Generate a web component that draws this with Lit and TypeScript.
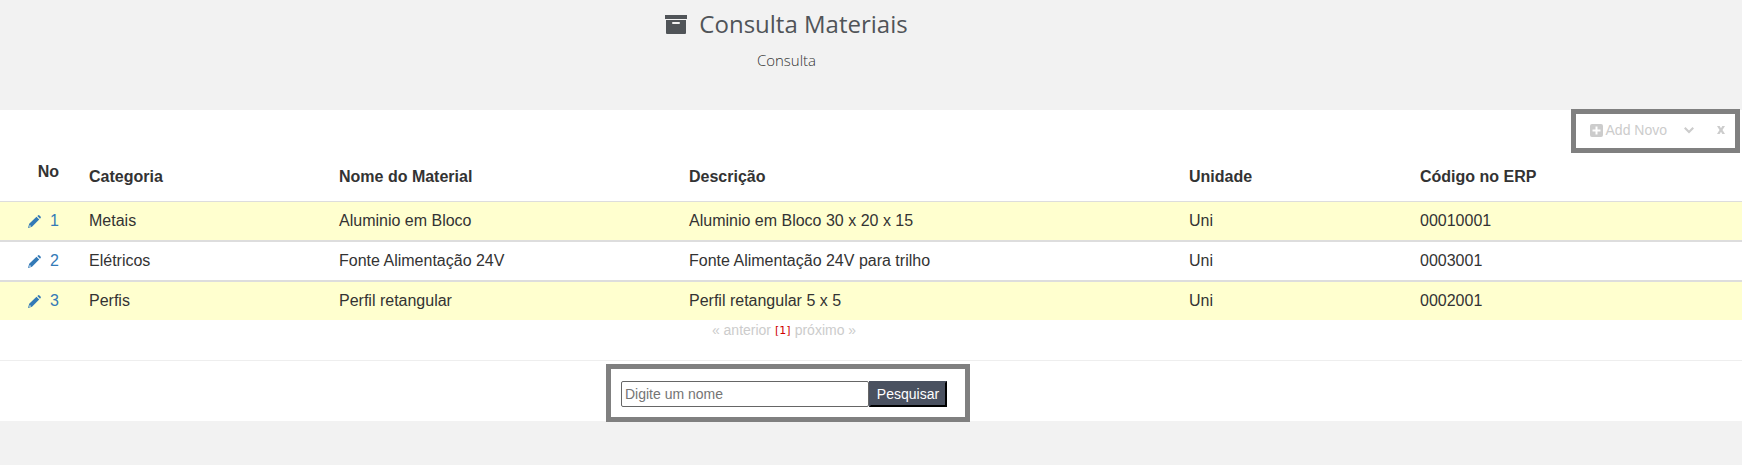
import { LitElement, html, css, svg } from "lit";
import { customElement, state } from "lit/decorators.js";

interface Material {
  no: number;
  categoria: string;
  nome: string;
  descricao: string;
  unidade: string;
  codigo: string;
}

const icon = (cls: string, box: string, d: string) => html`
  <svg class=${cls} viewBox=${box} aria-hidden="true">${svg`<path fill-rule="evenodd" d=${d}></path>`}</svg>
`;

const ARCHIVE = "M0 0H22V4H0ZM1 5H21V18Q21 19 20 19H2Q1 19 1 18ZM8 7Q7 7 7 8T8 9H14Q15 9 15 8T14 7Z";
const PENCIL = "M0 13L1.200 8.800L8.500 1.800L11.200 4.500L4 11.700ZM9.300 1L10 .4Q10.800 -.2 11.500 .5L12.500 1.500Q13.300 2.300 12.600 3L12 3.700ZM1.200 11.900L3.200 11.300L1.800 9.900Z";
const PLUS = "M2 0H11Q13 0 13 2V11Q13 13 11 13H2Q0 13 0 11V2Q0 0 2 0ZM5.500 2.500V5.500H2.500V7.500H5.500V10.500H7.500V7.500H10.500V5.500H7.500V2.500Z";
const CHEVRON = "M0 1.500L1.500 0L5 3.500L8.500 0L10 1.500L5 6.500Z";
const CROSS = "M0 0H2.600L4 2.200L5.400 0H8L5.500 4L8 8H5.400L4 5.800L2.600 8H0L2.500 4Z";

@customElement("app-root")
export class AppRoot extends LitElement {
  @state() private materiais: Material[] = [
    { no: 1, categoria: "Metais", nome: "Aluminio em Bloco", descricao: "Aluminio em Bloco 30 x 20 x 15", unidade: "Uni", codigo: "00010001" },
    { no: 2, categoria: "Elétricos", nome: "Fonte Alimentação 24V", descricao: "Fonte Alimentação 24V para trilho", unidade: "Uni", codigo: "0003001" },
    { no: 3, categoria: "Perfis", nome: "Perfil retangular", descricao: "Perfil retangular 5 x 5", unidade: "Uni", codigo: "0002001" },
  ];

  static styles = css`
    :host {
      display: block;
      min-height: 100vh;
      background: #f2f2f2;
      color: #333;
      font: 16px/20px "Liberation Sans", Arial, sans-serif;
    }
    * { box-sizing: border-box; }
    svg { display: block; fill: currentColor; }
    a { text-decoration: none; }
    header {
      display: flex;
      flex-direction: column;
      align-items: center;
      gap: 8px;
      height: 110px;
      padding: 7px 169px 0 0;
      color: #505458;
      font-family: "Open Sans", sans-serif;
    }
    h1 {
      display: flex;
      align-items: center;
      gap: 12px;
      margin: 0;
      font-size: 24px;
      font-weight: 400;
      line-height: 34px;
    }
    .archive { width: 22px; height: 19px; }
    .subtitle { margin: 0; color: #333; font-size: 15px; font-weight: 300; line-height: 22px; }
    main { background: #fff; }
    .toolbar { display: flex; justify-content: flex-end; height: 44px; padding-right: 2px; }
    .tools {
      display: flex;
      align-items: center;
      height: 44px;
      margin-top: -1px;
      padding: 0 10px 2px 14px;
      border: 5px solid #808080;
      color: #ccc;
      font-size: 14px;
    }
    .tools a, .tools button { color: inherit; }
    .add { display: flex; align-items: center; gap: 3px; margin-right: 17px; }
    .tools button { padding: 0; border: 0; background: none; }
    .plus { width: 13px; height: 13px; }
    .chevron { width: 10px; height: 7px; }
    .cross { width: 8px; height: 8px; margin-left: 23px; }
    table { width: 100%; table-layout: fixed; border-collapse: separate; border-spacing: 0; }
    .c-no { width: 74px; }
    .c-cat { width: 250px; }
    .c-nome { width: 350px; }
    .c-desc { width: 500px; }
    .c-uni { width: 231px; }
    th, td { padding: 0 15px; text-align: left; white-space: nowrap; }
    th { height: 48px; padding-top: 13px; border-bottom: 1px solid #ddd; vertical-align: top; }
    th.no { padding-top: 8px; }
    .no { text-align: right; }
    td { height: 40px; border-bottom: 2px solid #ddd; }
    tr:last-child td { height: 38px; border-bottom: 0; }
    tbody tr:nth-child(odd) { background: #ffffcf; }
    .edit { display: flex; align-items: center; justify-content: flex-end; gap: 9px; color: #337ab7; }
    .pencil { width: 13px; height: 13px; }
    .pages {
      display: flex;
      justify-content: center;
      gap: 4px;
      height: 41px;
      padding-right: 174px;
      border-bottom: 1px solid #eee;
      color: #ccc;
      font-size: 14px;
    }
    .pages a { color: inherit; }
    .current { color: #d00000; font: 11px/22px "DejaVu Sans", sans-serif; }
    .search { display: flex; justify-content: center; padding: 3px 166px 0 0; }
    form {
      display: flex;
      height: 58px;
      margin-bottom: -1px;
      padding: 12px 18px 10px 10px;
      border: 5px solid #808080;
    }
    input, form button { height: 26px; font: 14px "Liberation Sans", Arial, sans-serif; }
    input { width: 248px; padding: 1px 3px; border: 1px solid #666; border-radius: 2px; background: #fff; }
    input::placeholder { color: #757575; }
    form button { width: 78px; padding: 0; border: 2px solid; border-color: #4a5160 #000 #000 #4a5160; background: #4a5160; color: #fff; }
  `;

  render() {
    return html`
      <header>
        <h1>${icon("archive", "0 0 22 19", ARCHIVE)}<span>Consulta Materiais</span></h1>
        <p class="subtitle">Consulta</p>
      </header>
      <main>
        <div class="toolbar">
          <div class="tools">
            <a class="add" href="#novo">${icon("plus", "0 0 13 13", PLUS)}<span>Add Novo</span></a>
            <button type="button" aria-label="Recolher">${icon("chevron", "0 0 10 7", CHEVRON)}</button>
            <button type="button" aria-label="Fechar">${icon("cross", "0 0 8 8", CROSS)}</button>
          </div>
        </div>
        <table>
          <colgroup><col class="c-no"><col class="c-cat"><col class="c-nome"><col class="c-desc"><col class="c-uni"><col></colgroup>
          <thead>
            <tr>
              <th class="no">No</th><th>Categoria</th><th>Nome do Material</th>
              <th>Descrição</th><th>Unidade</th><th>Código no ERP</th>
            </tr>
          </thead>
          <tbody>
            ${this.materiais.map((m) => html`
              <tr>
                <td class="no"><a class="edit" href="#material-${m.no}">${icon("pencil", "0 0 13 13", PENCIL)}<span>${m.no}</span></a></td>
                <td>${m.categoria}</td><td>${m.nome}</td><td>${m.descricao}</td>
                <td>${m.unidade}</td><td>${m.codigo}</td>
              </tr>`)}
          </tbody>
        </table>
        <nav class="pages" aria-label="Páginas">
          <a href="#anterior">« anterior</a><span class="current">[1]</span><a href="#proximo">próximo »</a>
        </nav>
        <div class="search">
          <form @submit=${(e: Event) => e.preventDefault()}>
            <input type="text" aria-label="Digite um nome" placeholder="Digite um nome">
            <button type="submit">Pesquisar</button>
          </form>
        </div>
      </main>
    `;
  }
}
